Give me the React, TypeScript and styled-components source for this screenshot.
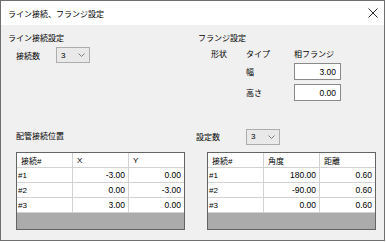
import React from "react";
import styled, { createGlobalStyle } from "styled-components";

const GlobalStyle = createGlobalStyle`
  html, body {
    margin: 0;
    padding: 0;
    background: #ffffff;
  }
  body {
    font-family: "Liberation Sans", "Noto Sans CJK JP", sans-serif;
    font-size: 8px;
    color: #000;
  }
`;

const positions = [
  ["#1", "-3.00", "0.00"],
  ["#2", "0.00", "-3.00"],
  ["#3", "3.00", "0.00"],
];

const angles = [
  ["#1", "180.00", "0.60"],
  ["#2", "-90.00", "0.60"],
  ["#3", "0.00", "0.60"],
];

function Chevron(): JSX.Element {
  return (
    <svg width="7" height="4" viewBox="0 0 7 4">
      <path d="M0.5 0.5 L3.5 3.5 L6.5 0.5" fill="none" stroke="#707070" strokeWidth="0.9" />
    </svg>
  );
}

function Combo({ value }: { value: string }): JSX.Element {
  return (
    <ComboBox>
      <span>{value}</span>
      <Chevron />
    </ComboBox>
  );
}

function DataGrid({ headers, rows }: { headers: string[]; rows: string[][] }): JSX.Element {
  return (
    <Grid>
      <GridRow>
        {headers.map((h) => (
          <HeadCell key={h}>{h}</HeadCell>
        ))}
      </GridRow>
      {rows.map((r) => (
        <GridRow key={r[0]}>
          <KeyCell>{r[0]}</KeyCell>
          <NumCell>{r[1]}</NumCell>
          <NumCell>{r[2]}</NumCell>
        </GridRow>
      ))}
    </Grid>
  );
}

function App(): JSX.Element {
  return (
    <>
      <GlobalStyle />
      <Window>
        <TitleBar>
          <span>ライン接続、フランジ設定</span>
          <svg width="10" height="10" viewBox="0 0 10 10">
            <path d="M0.5 0.5 L9.5 9.5 M9.5 0.5 L0.5 9.5" stroke="#111" strokeWidth="0.9" />
          </svg>
        </TitleBar>
        <Body>
          <TopSection>
            <div>
              <SectionTitle>ライン接続設定</SectionTitle>
              <CountRow>
                <FieldLabel $width={40}>接続数</FieldLabel>
                <Combo value="3" />
              </CountRow>
            </div>
            <FlangeColumn>
              <SectionTitle>フランジ設定</SectionTitle>
              <FlangeGrid>
                <span>形状</span>
                <span>タイプ</span>
                <span>相フランジ</span>
                <span />
                <span>幅</span>
                <NumBox>3.00</NumBox>
                <span />
                <span>高さ</span>
                <NumBox>0.00</NumBox>
              </FlangeGrid>
            </FlangeColumn>
          </TopSection>
          <BottomSection>
            <PipeColumn>
              <HeadRow>
                <SectionTitle>配管接続位置</SectionTitle>
              </HeadRow>
              <DataGrid headers={["接続#", "X", "Y"]} rows={positions} />
            </PipeColumn>
            <AngleColumn>
              <HeadRow>
                <FieldLabel $width={50}>設定数</FieldLabel>
                <Combo value="3" />
              </HeadRow>
              <DataGrid headers={["接続#", "角度", "距離"]} rows={angles} />
            </AngleColumn>
          </BottomSection>
        </Body>
      </Window>
    </>
  );
}

const Window = styled.div`
  width: 385px;
  height: 241px;
  box-sizing: border-box;
  border: 1px solid #6e6e6e;
  background: #f0f0f0;
  display: flex;
  flex-direction: column;
`;

const TitleBar = styled.div`
  height: 24px;
  flex-shrink: 0;
  background: #ffffff;
  display: flex;
  align-items: center;
  justify-content: space-between;
  padding: 0 6px 0 7px;
  font-size: 8px;
`;

const Body = styled.div`
  padding: 8px 0 0 7px;
  display: flex;
  flex-direction: column;
`;

const TopSection = styled.div`
  display: grid;
  grid-template-columns: 189px 1fr;
  height: 68px;
`;

const SectionTitle = styled.div`
  line-height: 12px;
  height: 12px;
  white-space: nowrap;
`;

const CountRow = styled.div`
  display: flex;
  align-items: center;
  margin-top: 2px;
  padding-left: 8px;
`;

const FieldLabel = styled.span<{ $width: number }>`
  width: ${(p) => p.$width}px;
  flex-shrink: 0;
`;

const ComboBox = styled.div`
  width: 34px;
  height: 16px;
  box-sizing: border-box;
  border: 1px solid #adadad;
  background: #e9e9e9;
  display: flex;
  align-items: center;
  justify-content: space-between;
  padding: 0 4px 0 4px;
`;

const FlangeColumn = styled.div`
  padding-left: 1px;
`;

const FlangeGrid = styled.div`
  display: grid;
  grid-template-columns: 35px 48px 47px;
  grid-template-rows: 12px 17px 17px;
  row-gap: 4px;
  align-items: center;
  margin-top: 2px;
  padding-left: 13px;
  white-space: nowrap;
`;

const NumBox = styled.div`
  height: 17px;
  box-sizing: border-box;
  border: 1px solid #8a8a8a;
  background: #ffffff;
  display: flex;
  align-items: center;
  justify-content: flex-end;
  padding-right: 4px;
  font-size: 8.5px;
`;

const BottomSection = styled.div`
  display: grid;
  grid-template-columns: 188px 1fr;
  margin-top: 27px;
`;

const PipeColumn = styled.div`
  padding-left: 8px;
`;

const AngleColumn = styled.div``;

const HeadRow = styled.div`
  height: 17px;
  display: flex;
  align-items: center;
  margin-bottom: 7px;
`;

const Grid = styled.div`
  width: 169px;
  height: 78px;
  box-sizing: border-box;
  border: 1px solid #646464;
  background: #ababab;
  ${AngleColumn} & {
    margin-left: 11px;
  }
`;

const GridRow = styled.div`
  display: grid;
  grid-template-columns: 56px 56px 55px;
  height: 15px;
  box-sizing: border-box;
  background: #ffffff;
  border-bottom: 1px solid #d2d2d2;
`;

const Cell = styled.div`
  display: flex;
  align-items: center;
  border-right: 1px solid #d2d2d2;
  white-space: nowrap;
  &:last-child {
    border-right: none;
  }
`;

const HeadCell = styled(Cell)`
  padding-left: 4px;
`;

const KeyCell = styled(Cell)`
  padding-left: 1px;
`;

const NumCell = styled(Cell)`
  justify-content: flex-end;
  padding-right: 3px;
  font-size: 8.5px;
`;

export default App;
